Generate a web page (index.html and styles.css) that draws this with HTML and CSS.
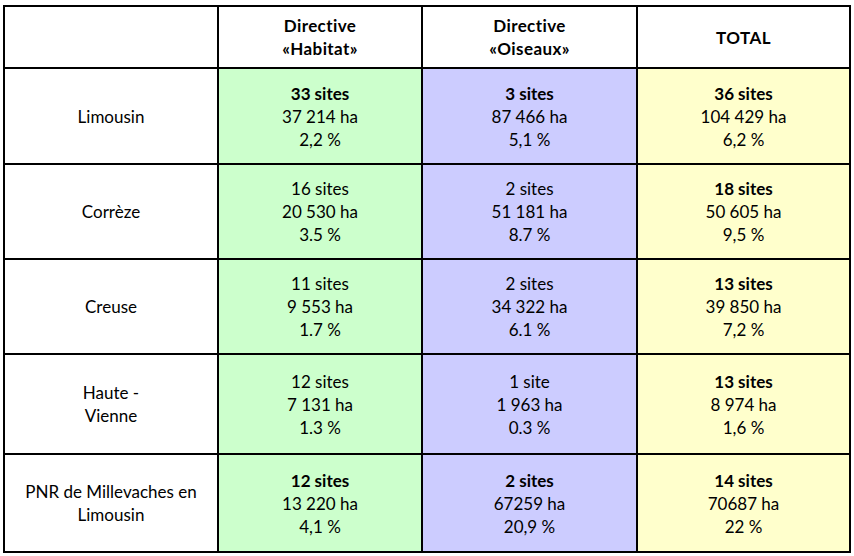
FILE: index.html
```html
<!DOCTYPE html>
<html lang="fr">
<head>
<meta charset="utf-8">
<title>Natura 2000 Limousin</title>
<link rel="stylesheet" href="styles.css">
</head>
<body>
<div class="grid">
  <div class="cell h"></div>
  <div class="cell h"><p><b>Directive<br>«Habitat»</b></p></div>
  <div class="cell h"><p><b>Directive<br>«Oiseaux»</b></p></div>
  <div class="cell h"><p><b>TOTAL</b></p></div>

  <div class="cell"><p>Limousin</p></div>
  <div class="cell g"><p><b>33 sites</b><br>37 214 ha<br>2,2 %</p></div>
  <div class="cell p"><p><b>3 sites</b><br>87 466 ha<br>5,1 %</p></div>
  <div class="cell y"><p><b>36 sites</b><br>104 429 ha<br>6,2 %</p></div>

  <div class="cell"><p>Corrèze</p></div>
  <div class="cell g"><p>16 sites<br>20 530 ha<br>3.5 %</p></div>
  <div class="cell p"><p>2 sites<br>51 181 ha<br>8.7 %</p></div>
  <div class="cell y"><p><b>18 sites</b><br>50 605 ha<br>9,5 %</p></div>

  <div class="cell"><p>Creuse</p></div>
  <div class="cell g"><p>11 sites<br>9 553 ha<br>1.7 %</p></div>
  <div class="cell p"><p>2 sites<br>34 322 ha<br>6.1 %</p></div>
  <div class="cell y"><p><b>13 sites</b><br>39 850 ha<br>7,2 %</p></div>

  <div class="cell"><p>Haute -<br>Vienne</p></div>
  <div class="cell g"><p>12 sites<br>7 131 ha<br>1.3 %</p></div>
  <div class="cell p"><p>1 site<br>1 963 ha<br>0.3 %</p></div>
  <div class="cell y"><p><b>13 sites</b><br>8 974 ha<br>1,6 %</p></div>

  <div class="cell"><p>PNR de Millevaches en<br>Limousin</p></div>
  <div class="cell g"><p><b>12 sites</b><br>13 220 ha<br>4,1 %</p></div>
  <div class="cell p"><p><b>2 sites</b><br>67259 ha<br>20,9 %</p></div>
  <div class="cell y"><p><b>14 sites</b><br>70687 ha<br>22 %</p></div>
</div>
</body>
</html>
```
FILE: styles.css
```css
html, body {
  margin: 0;
  padding: 0;
  background: #ffffff;
}
body {
  padding: 5px 0 0 3px;
  font-family: Lato, "Open Sans", sans-serif;
  font-size: 17px;
  line-height: 23px;
  color: #000000;
  font-variant-ligatures: none;
}
.grid {
  display: grid;
  width: 846px;
  grid-template-columns: 214px 204px 215px 213px;
  grid-template-rows: 62px 96px 95px 95px 100px 98px;
  border-left: 2px solid #000;
  border-top: 2px solid #000;
}
.cell {
  border-right: 2px solid #000;
  border-bottom: 2px solid #000;
  display: flex;
  align-items: center;
  justify-content: center;
  text-align: center;
  background: #ffffff;
}
.cell p { margin: 0; }
.cell b { font-weight: 700; }
.h b { letter-spacing: 0.4px; }
.g { background: #ccffcc; }
.p { background: #ccccff; }
.y { background: #ffffcc; }
```
